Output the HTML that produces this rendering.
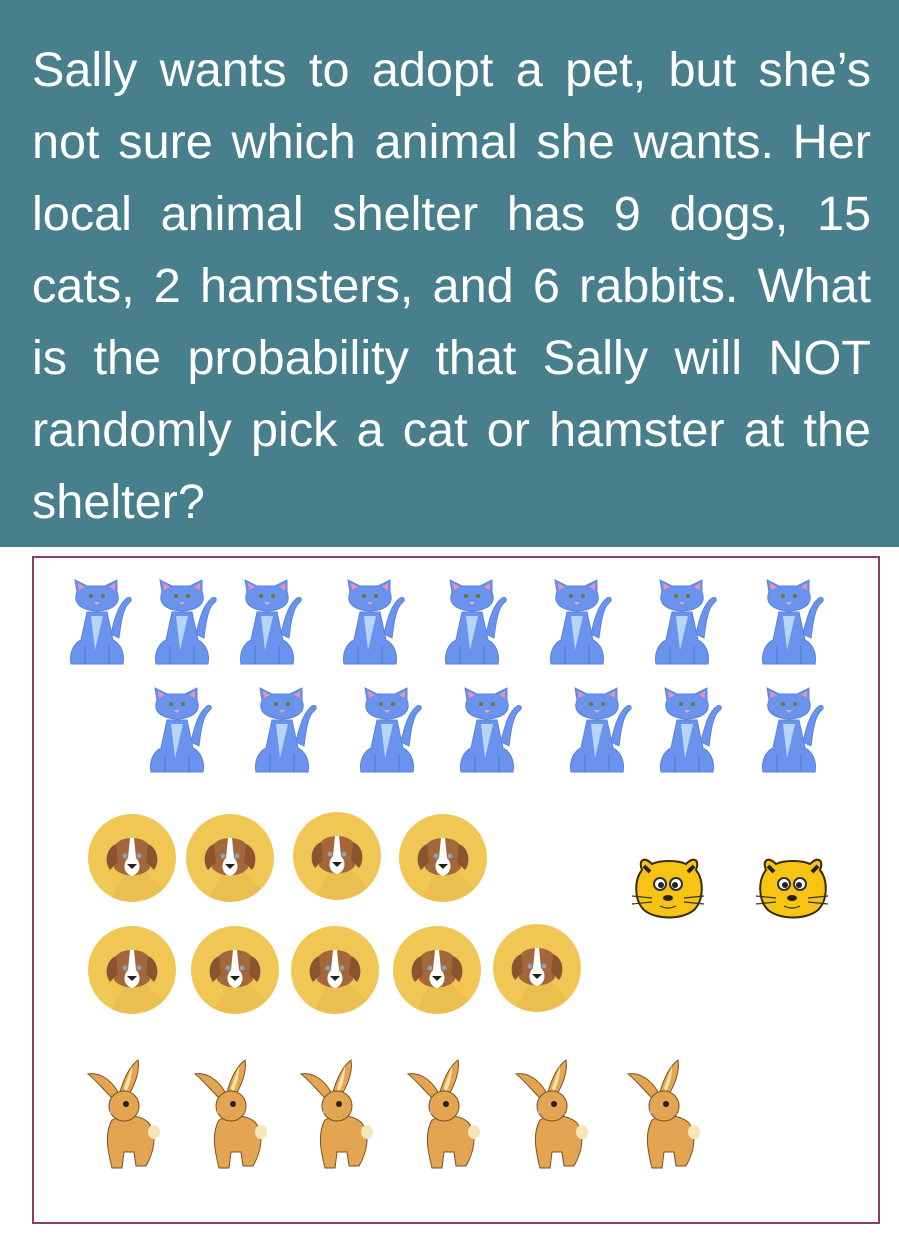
<!DOCTYPE html>
<html><head><meta charset="utf-8"><style>
html,body{margin:0;padding:0;background:#fff;width:899px;height:1243px;overflow:hidden}
.hdr{position:absolute;left:0;top:0;width:899px;height:547px;background:#487f8c}
.txt{position:absolute;left:32px;top:34px;width:839px;color:#fff;font-family:"Liberation Sans",sans-serif;font-size:48.6px;line-height:72px;text-align:justify}
.box{position:absolute;left:32px;top:556px;width:844px;height:664px;border:2px solid #8d3d63}
svg{position:absolute;left:0;top:0}
</style></head><body>
<div class="hdr"></div>
<div class="txt">Sally wants to adopt a pet, but she’s not sure which animal she wants. Her local animal shelter has 9 dogs, 15 cats, 2 hamsters, and 6 rabbits. What is the probability that Sally will NOT randomly pick a cat or hamster at the shelter?</div>
<div class="box"></div>
<svg width="899" height="1243">
<defs>
<g id="cat">
<path d="M46 58 C50 40 54 28 62 22 C66 20 68 24 64 27 C58 32 56 46 54 62 Z" fill="#6a93ee" stroke="#5a82e0"/>
<path d="M22 36 L16 64 C8 68 4 78 6 88 L58 88 C60 78 56 68 48 64 L42 36 Z" fill="#6a93ee" stroke="#5a82e0"/>
<path d="M26 40 L30 74 L38 40 Z" fill="#b7d4fb"/>
<path d="M12 16 L10 4 L22 10 L40 10 L52 4 L52 16 C56 26 50 34 32 35 C14 34 8 26 12 16 Z" fill="#6a93ee" stroke="#5a82e0"/>
<path d="M13 7 L20 11 L14 14Z M50 7 L44 11 L50 14Z" fill="#f08fb0"/>
<circle cx="26" cy="20" r="2" fill="#6b7b2a"/><circle cx="38" cy="20" r="2" fill="#6b7b2a"/>
<path d="M29 26 h6 l-3 3z" fill="#f49fbd"/>
<path d="M20 88 v-18 M44 88 v-18" stroke="#4f76d6" fill="none"/>
</g>
<g id="dog">
<circle cx="0" cy="0" r="44" fill="#f0c654"/>
<path d="M0 0 L31 31 A44 44 0 0 1 -20 39 Z" fill="#e6bb4d" opacity=".6"/>
<path d="M-16 -14 C-10 -22 10 -22 16 -14 L18 10 C10 20 -10 20 -18 10 Z" fill="#a4673a"/>
<path d="M-16 -14 C-26 -10 -28 4 -22 12 L-14 4 Z M16 -14 C26 -10 28 4 22 12 L14 4 Z" fill="#8b5430"/>
<path d="M-2 -20 L2 -20 L4 0 C10 6 8 16 0 18 C-8 16 -10 6 -4 0 Z" fill="#fff"/>
<circle cx="-7" cy="-2" r="2.5" fill="#8fa3b3"/><circle cx="7" cy="-2" r="2.5" fill="#8fa3b3"/>
<path d="M-5 6 h10 l-5 5z" fill="#222"/>
</g>
<g id="ham">
<path d="M10 14 C6 4 12 0 20 8 C28 4 46 4 54 8 C62 0 68 4 64 14 C72 24 72 44 62 54 C50 64 24 64 12 54 C2 44 2 24 10 14Z" fill="#f7c414" stroke="#3a2a00" stroke-width="2"/>
<path d="M12 10 L18 16 M62 10 L56 16" stroke="#222" stroke-width="4"/>
<circle cx="28" cy="28" r="6" fill="#fff" stroke="#333" stroke-width="2"/><circle cx="44" cy="28" r="6" fill="#fff" stroke="#333" stroke-width="2"/>
<circle cx="29" cy="29" r="3" fill="#222"/><circle cx="43" cy="29" r="3" fill="#222"/>
<ellipse cx="36" cy="42" rx="5" ry="3" fill="#222"/>
<path d="M28 50 Q36 54 44 50 M0 40 L20 42 M0 48 L20 46 M52 42 L72 40 M52 46 L72 48" stroke="#333" fill="none" stroke-width="1.2"/>
</g>
<g id="rab">
<path d="M24 40 C14 30 6 20 0 16 C10 14 22 20 30 34 Z" fill="#e3a552" stroke="#7a5020"/>
<path d="M32 34 C36 20 42 8 50 2 C52 14 46 28 40 38 Z" fill="#e3a552" stroke="#7a5020"/>
<path d="M44 8 C44 18 42 26 38 34 L36 30 Z" fill="#f7e3a8"/>
<path d="M24 62 C16 76 20 94 24 110 L34 110 L36 94 L46 94 L48 108 L58 108 C66 94 70 76 60 64 C50 56 34 56 24 62Z" fill="#e3a552" stroke="#7a5020"/>
<circle cx="36" cy="48" r="15" fill="#e3a552" stroke="#7a5020"/>
<ellipse cx="66" cy="74" rx="6" ry="7" fill="#f4e6b8"/>
<circle cx="38" cy="46" r="3" fill="#222"/>
<path d="M22 52 l4 2 -4 2z" fill="#e59a9a"/>
</g>
</defs>
<use href="#cat" x="65" y="576"/><use href="#cat" x="150" y="576"/><use href="#cat" x="235" y="576"/><use href="#cat" x="338" y="576"/><use href="#cat" x="440" y="576"/><use href="#cat" x="545" y="576"/><use href="#cat" x="650" y="576"/><use href="#cat" x="757" y="576"/>
<use href="#cat" x="145" y="684"/><use href="#cat" x="250" y="684"/><use href="#cat" x="355" y="684"/><use href="#cat" x="455" y="684"/><use href="#cat" x="565" y="684"/><use href="#cat" x="655" y="684"/><use href="#cat" x="757" y="684"/>
<use href="#dog" x="132" y="858"/><use href="#dog" x="230" y="858"/><use href="#dog" x="337" y="856"/><use href="#dog" x="443" y="858"/>
<use href="#dog" x="132" y="970"/><use href="#dog" x="235" y="970"/><use href="#dog" x="335" y="970"/><use href="#dog" x="437" y="970"/><use href="#dog" x="537" y="968"/>
<use href="#ham" x="632" y="856"/><use href="#ham" x="756" y="856"/>
<use href="#rab" x="88" y="1058"/><use href="#rab" x="195" y="1058"/><use href="#rab" x="301" y="1058"/><use href="#rab" x="408" y="1058"/><use href="#rab" x="516" y="1058"/><use href="#rab" x="628" y="1058"/>
</svg>
</body></html>
